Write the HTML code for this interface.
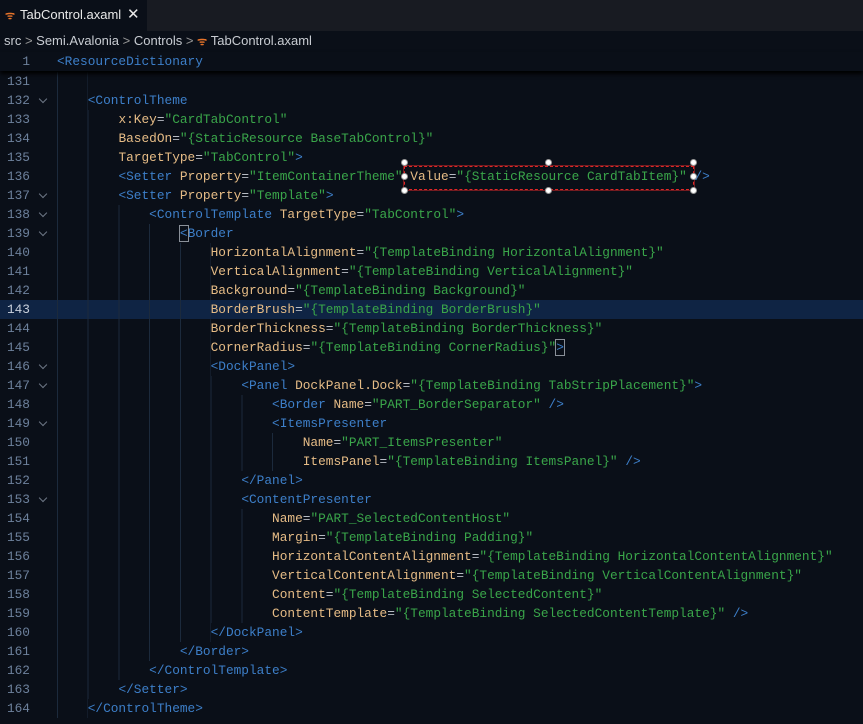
<!DOCTYPE html>
<html><head><style>
body{margin:0;width:863px;height:724px;background:#0a0f18;overflow:hidden;font-family:"Liberation Sans",sans-serif;position:relative}
.tabbar{position:absolute;top:0;left:0;width:863px;height:31px;background:#181b22}
.tab{position:absolute;left:0;top:0;width:147px;height:31px;background:#0a0f18;color:#e8e8e8;font-size:13px}
.crumb{position:absolute;top:33px;left:4px;color:#c8ccd2;font-size:13px}
.code{position:absolute;left:0;font-family:"Liberation Mono",monospace;font-size:12.8px;white-space:pre}
.ln{position:absolute;left:0;width:30px;text-align:right;color:#6d819c;font-family:"Liberation Mono",monospace;font-size:12.8px}
.row{position:absolute;left:0;width:863px;height:19px;line-height:19px}
.t{color:#3d7fc9}.a{color:#e6bc86}.s{color:#3aa64a}.p{color:#b8bcc4}
.g{position:absolute;top:0;height:19px;background:repeating-linear-gradient(to right,#1c2a3c 0 1px,transparent 1px 30.72px)}
.chev{position:absolute;left:40px;top:5px;width:5px;height:5px;border-right:1px solid #6d7785;border-bottom:1px solid #6d7785;transform:rotate(45deg)}
.h{position:absolute;width:7px;height:7px;border-radius:50%;background:#fff;border:1px solid #999;box-sizing:border-box}
</style></head><body>
<div class="tabbar"><div class="tab"><span style="position:absolute;left:5px;top:8px;color:#e8742a;font-size:11px;font-weight:bold">ᯤ</span><span style="position:absolute;left:20px;top:7px">TabControl.axaml</span><span style="position:absolute;left:127px;top:5px;font-size:15px">✕</span></div></div>
<div class="crumb">src <span style="color:#999">&gt;</span> Semi.Avalonia <span style="color:#999">&gt;</span> Controls <span style="color:#999">&gt;</span> <span style="color:#e8742a;font-size:11px;font-weight:bold">ᯤ</span> TabControl.axaml</div>
<div class="row" style="top:52px;box-shadow:0 3px 4px #000;background:#0a0f18;z-index:2"><span class="ln">1</span><span class="code" style="left:57px"><span class="t">&lt;ResourceDictionary</span></span></div>
<div id="c"></div>
<div style="position:absolute;left:404px;top:166px;width:290px;height:24px;border:1.5px dashed #e02828;box-sizing:border-box;box-shadow:0 0 0 1px rgba(224,40,40,.5)"></div>
<div class="h" style="left:401px;top:159px"></div><div class="h" style="left:545px;top:159px"></div><div class="h" style="left:690px;top:159px"></div>
<div class="h" style="left:401px;top:173px"></div><div class="h" style="left:690px;top:173px"></div>
<div class="h" style="left:401px;top:187px"></div><div class="h" style="left:545px;top:187px"></div><div class="h" style="left:690px;top:187px"></div>
<script>
const L=[
[131,1,'',0],
[132,1,'<t>&lt;ControlTheme</t>',1],
[133,2,'<a>x:Key</a><p>=</p><s>"CardTabControl"</s>',0],
[134,2,'<a>BasedOn</a><p>=</p><s>"{StaticResource BaseTabControl}"</s>',0],
[135,2,'<a>TargetType</a><p>=</p><s>"TabControl"</s><t>&gt;</t>',0],
[136,2,'<t>&lt;Setter</t> <a>Property</a><p>=</p><s>"ItemContainerTheme"</s> <a>Value</a><p>=</p><s>"{StaticResource CardTabItem}"</s> <t>/&gt;</t>',0],
[137,2,'<t>&lt;Setter</t> <a>Property</a><p>=</p><s>"Template"</s><t>&gt;</t>',1],
[138,3,'<t>&lt;ControlTemplate</t> <a>TargetType</a><p>=</p><s>"TabControl"</s><t>&gt;</t>',1],
[139,4,'<t><span style="outline:1px solid #8a9099">&lt;</span>Border</t>',1],
[140,5,'<a>HorizontalAlignment</a><p>=</p><s>"{TemplateBinding HorizontalAlignment}"</s>',0],
[141,5,'<a>VerticalAlignment</a><p>=</p><s>"{TemplateBinding VerticalAlignment}"</s>',0],
[142,5,'<a>Background</a><p>=</p><s>"{TemplateBinding Background}"</s>',0],
[143,5,'<a>BorderBrush</a><p>=</p><s>"{TemplateBinding BorderBrush}"</s>',0],
[144,5,'<a>BorderThickness</a><p>=</p><s>"{TemplateBinding BorderThickness}"</s>',0],
[145,5,'<a>CornerRadius</a><p>=</p><s>"{TemplateBinding CornerRadius}"</s><t><span style="outline:1px solid #8a9099">&gt;</span></t>',0],
[146,5,'<t>&lt;DockPanel&gt;</t>',1],
[147,6,'<t>&lt;Panel</t> <a>DockPanel.Dock</a><p>=</p><s>"{TemplateBinding TabStripPlacement}"</s><t>&gt;</t>',1],
[148,7,'<t>&lt;Border</t> <a>Name</a><p>=</p><s>"PART_BorderSeparator"</s> <t>/&gt;</t>',0],
[149,7,'<t>&lt;ItemsPresenter</t>',1],
[150,8,'<a>Name</a><p>=</p><s>"PART_ItemsPresenter"</s>',0],
[151,8,'<a>ItemsPanel</a><p>=</p><s>"{TemplateBinding ItemsPanel}"</s> <t>/&gt;</t>',0],
[152,6,'<t>&lt;/Panel&gt;</t>',0],
[153,6,'<t>&lt;ContentPresenter</t>',1],
[154,7,'<a>Name</a><p>=</p><s>"PART_SelectedContentHost"</s>',0],
[155,7,'<a>Margin</a><p>=</p><s>"{TemplateBinding Padding}"</s>',0],
[156,7,'<a>HorizontalContentAlignment</a><p>=</p><s>"{TemplateBinding HorizontalContentAlignment}"</s>',0],
[157,7,'<a>VerticalContentAlignment</a><p>=</p><s>"{TemplateBinding VerticalContentAlignment}"</s>',0],
[158,7,'<a>Content</a><p>=</p><s>"{TemplateBinding SelectedContent}"</s>',0],
[159,7,'<a>ContentTemplate</a><p>=</p><s>"{TemplateBinding SelectedContentTemplate}"</s> <t>/&gt;</t>',0],
[160,5,'<t>&lt;/DockPanel&gt;</t>',0],
[161,4,'<t>&lt;/Border&gt;</t>',0],
[162,3,'<t>&lt;/ControlTemplate&gt;</t>',0],
[163,2,'<t>&lt;/Setter&gt;</t>',0],
[164,1,'<t>&lt;/ControlTheme&gt;</t>',0]];
let h='';const cw=7.68;
L.forEach((r,i)=>{const top=72+i*19;const html=r[2].replace(/<(t|a|s|p)>/g,'<span class="$1">').replace(/<\/(t|a|s|p)>/g,'</span>');
const gi=r[0]==131?1:r[1];
h+=`<div class="row" style="top:${top}px;${r[0]==143?'background:#0f2444':''}"><span class="ln" style="${r[0]==143?'color:#c8d0dc':''}">${r[0]}</span>${r[3]?'<span class="chev"></span>':''}<span class="g" style="left:57px;width:${gi*4*cw}px"></span><span class="code" style="left:${57+r[1]*4*cw}px">${html}</span></div>`});
document.getElementById('c').innerHTML=h;
</script>
</body></html>
